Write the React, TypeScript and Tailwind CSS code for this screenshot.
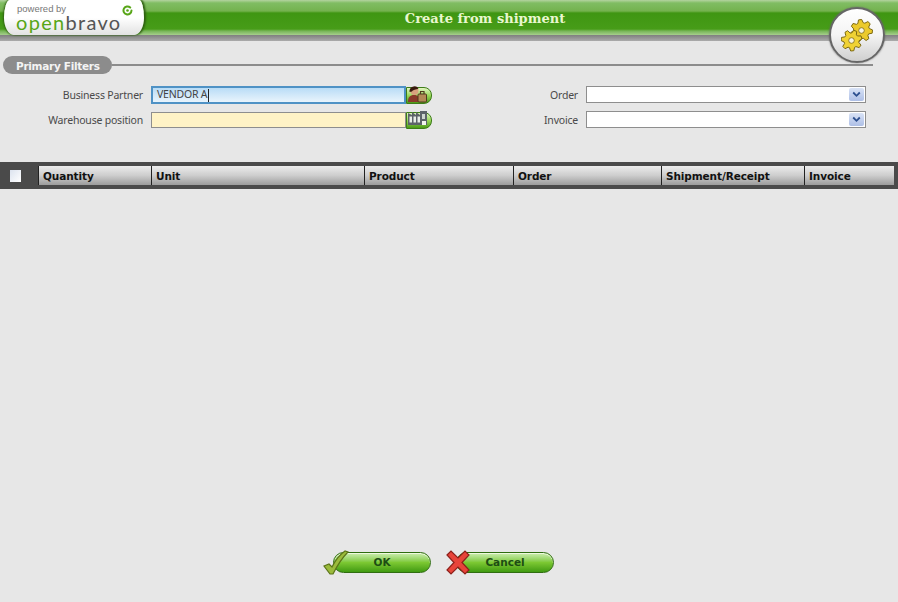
const LABEL = "font-['Noto_Sans',sans-serif] text-[10.5px] tracking-[-0.2px] text-[#4a4a4a] pt-[2px]";

const columns = [
  { label: 'Quantity', width: 'w-[113px]' },
  { label: 'Unit', width: 'w-[213px]' },
  { label: 'Product', width: 'w-[149px]' },
  { label: 'Order', width: 'w-[148px]' },
  { label: 'Shipment/Receipt', width: 'w-[143px]' },
  { label: 'Invoice', width: 'w-[90px]' },
];

// builds the outline of a cog wheel
function gearPath(cx: number, cy: number, outer: number, inner: number, teeth: number, rot: number) {
  const pts: string[] = [];
  const step = (Math.PI * 2) / teeth;
  for (let i = 0; i < teeth; i++) {
    const a = rot + i * step;
    const offsets = [
      [-0.5, inner],
      [-0.28, outer],
      [0.05, outer],
      [0.27, inner],
    ];
    for (const [o, r] of offsets) {
      const t = a + o * step;
      pts.push(`${(cx + Math.cos(t) * r).toFixed(1)} ${(cy + Math.sin(t) * r).toFixed(1)}`);
    }
  }
  return `M${pts.join('L')}Z`;
}

function Logo() {
  return (
    <div className="relative ml-[4px] h-[35px] w-[140px] shrink-0 rounded-tl-[6px_18px] rounded-tr-[5px_18px] rounded-bl-[10px_18px] rounded-br-[10px_18px] bg-gradient-to-b from-white via-white to-[#e2e2e2] shadow-[2px_0_2px_#2f5f12,-1px_0_2px_#2f5f12]">
      <div className="absolute left-[13px] top-[3px] font-['Liberation_Sans',sans-serif] text-[9.5px] leading-[11px] text-[#777]">powered by</div>
      <div className="absolute left-[12px] top-[14px] font-['Lato',sans-serif] text-[20px] leading-[16px] tracking-[1.3px]">
        <span className="text-[#58a618]">open</span>
        <span className="text-[#555]">bravo</span>
      </div>
      <svg className="absolute left-[118px] top-[5px]" width="11" height="11" viewBox="0 0 11 11" fill="none">
        <path d="M9.500 5.500a4 4 0 1 1-1.300-3" stroke="#58a618" strokeWidth="2" strokeLinecap="round" />
        <circle cx="5.500" cy="5.500" r="1.300" fill="#58a618" />
      </svg>
    </div>
  );
}

function Gears() {
  return (
    <svg width="32" height="33" viewBox="0 0 32 33">
      <path d={gearPath(20.5, 11.5, 11, 8, 7, 0.2)} fill="#ecca2c" stroke="#7d6a12" strokeWidth="1" strokeLinejoin="round" />
      <circle cx="20.500" cy="11.500" r="2.800" fill="#f7f4e2" stroke="#7d6a12" strokeWidth="0.800" />
      <path d={gearPath(10.5, 21.5, 10.500, 7.500, 7, 0.7)} fill="#f0d234" stroke="#7d6a12" strokeWidth="1" strokeLinejoin="round" />
      <circle cx="10.500" cy="21.500" r="2.800" fill="#f7f4e2" stroke="#7d6a12" strokeWidth="0.800" />
    </svg>
  );
}

function PersonIcon() {
  return (
    <svg width="22" height="19" viewBox="0 0 22 19">
      <path d="M1 17c0-5 2-7 6-7s6 2 6 7z" fill="#8a3a2a" />
      <circle cx="7.500" cy="6" r="4" fill="#d8a27e" />
      <path d="M2.500 7a5 5 0 0 1 9-3.500C9 5 6 4.500 5 6.500z" fill="#38190d" />
      <rect x="11" y="9" width="8.500" height="8" rx="1" fill="#b28a56" stroke="#4f3a1d" />
      <path d="M13.500 9V6.500h3.500V9" fill="none" stroke="#4f3a1d" strokeWidth="1.200" />
    </svg>
  );
}

function WarehouseIcon() {
  return (
    <svg width="22" height="17" viewBox="0 0 22 17">
      <path d="M1 15V3l4 2V2l4 3V2l4 3V1h7v14z" fill="#5d6369" />
      <rect x="2.500" y="6.500" width="2.500" height="6" fill="#e9eee8" />
      <rect x="6.500" y="6.500" width="2.500" height="6" fill="#e9eee8" />
      <rect x="10.500" y="6.500" width="2.500" height="6" fill="#e9eee8" />
      <rect x="15" y="4" width="3" height="5" fill="#cfd5d0" />
      <rect x="15" y="11" width="4" height="4" fill="#f2f4ef" />
    </svg>
  );
}

function Selector({ children }: { children: React.ReactNode }) {
  return (
    <div className="relative h-[17px] w-[26px] rounded-r-[8px] border border-[#3d7d18] bg-gradient-to-b from-[#e3f5c0] via-[#9ad85a] to-[#4c9a12]">
      <div className="absolute -top-[3px] left-0">{children}</div>
    </div>
  );
}

function SelectBox() {
  return (
    <div className="flex h-[17px] w-[280px] items-center justify-end border border-[#8e8e8e] bg-white pr-[1px]">
      <div className="flex h-[13px] w-[15px] items-center justify-center rounded-[2px] bg-gradient-to-b from-[#d9e3f6] to-[#aebfe6]">
        <svg width="9" height="7" viewBox="0 0 9 7">
          <path d="M1.200 1.500L4.500 4.800L7.800 1.500" fill="none" stroke="#2c4f8f" strokeWidth="1.800" />
        </svg>
      </div>
    </div>
  );
}

function GreenButton({ label, children }: { label: string; children: React.ReactNode }) {
  return (
    <button className="relative flex h-[21px] w-[98px] items-center justify-center rounded-full border border-[#2f6d10] bg-gradient-to-b from-[#cdeeb0] via-[#7cc832] to-[#3f9a10] pt-[1px] font-['DejaVu_Sans',sans-serif] text-[10.5px] font-bold text-[#1d4d14] shadow-[inset_0_1px_0_#eef9df]">
      <span className="absolute left-[-11px] top-[-3px]">{children}</span>
      {label}
    </button>
  );
}

export default function App() {
  return (
    <div className="flex h-[602px] w-[898px] flex-col overflow-hidden bg-[#e7e7e7]">
      <header className="relative shrink-0">
        <div className="flex h-[35px] bg-[linear-gradient(to_bottom,#b4d3a0_0px,#80bd62_3px,#74b24e_11px,#3f9612_13px,#479c18_29px,#76b556_31px,#a6cf8c_35px)]">
          <Logo />
          <h1 className="flex flex-1 items-center justify-center pr-[72px] pt-[2px] font-['DejaVu_Serif','Liberation_Serif',serif] text-[13px] font-bold text-[#e9f7cf]">
            Create from shipment
          </h1>
        </div>
        <div className="h-[6px] bg-gradient-to-b from-[#7f7f7f] to-[#ababab]" />
        <div className="absolute right-[13px] top-[7px] flex h-[56px] w-[56px] items-center justify-center rounded-full border-2 border-[#666] bg-gradient-to-b from-white via-[#f4f4f4] to-[#cfcfcf] shadow-[0_0_2px_#666]">
          <Gears />
        </div>
      </header>

      <section className="mt-[15px] flex items-center pl-[3px] pr-[25px]">
        <div className="flex h-[18px] w-[109px] items-center rounded-full bg-[#8c8c8c] pl-[13px] pt-[3px] font-['DejaVu_Sans',sans-serif] text-[10.5px] font-bold tracking-[-0.3px] text-[#f4f4f4]">
          Primary Filters
        </div>
        <div className="h-[2px] flex-1 bg-[#8c8c8c]" />
      </section>

      <section className="mt-[12px] grid grid-cols-[151px_281px_154px_280px] gap-y-[7px]">
        <div className={`${LABEL} flex h-[18px] items-center justify-end pr-[8px]`}>Business Partner</div>
        <div className="flex items-center">
          <div className="flex h-[18px] w-[255px] items-center border-2 border-[#4f92c5] bg-gradient-to-b from-[#b9dcf6] to-[#e9f4fc] pl-[4px] font-['Noto_Sans',sans-serif] text-[10.5px] tracking-[-0.2px] text-[#444]">
            VENDOR A<span className="ml-[1px] h-[13px] w-px bg-[#222]" />
          </div>
          <Selector><PersonIcon /></Selector>
        </div>
        <div className={`${LABEL} flex h-[18px] items-center justify-end pr-[8px]`}>Order</div>
        <SelectBox />

        <div className={`${LABEL} flex h-[18px] items-center justify-end pr-[8px]`}>Warehouse position</div>
        <div className="flex items-center">
          <div className="h-[16px] w-[255px] border border-[#8e8e8e] bg-[#fff3c6]" />
          <Selector><WarehouseIcon /></Selector>
        </div>
        <div className={`${LABEL} flex h-[18px] items-center justify-end pr-[8px]`}>Invoice</div>
        <SelectBox />
      </section>

      <section className="mt-[33px] flex h-[27px] items-stretch border-y-[4px] border-[#4a4a4a] bg-[#4a4a4a]">
        <div className="flex w-[38px] shrink-0 items-center pl-[10px]">
          <div className="h-[12px] w-[11px] bg-gradient-to-br from-[#dce3ef] to-white" />
        </div>
        {columns.map((col) => (
          <div
            key={col.label}
            className={`${col.width} flex shrink-0 items-center border-l border-[#222] bg-gradient-to-b from-[#ececec] via-[#cdcdcd] to-[#9c9c9c] pl-[4px] pt-[2px] font-['DejaVu_Sans',sans-serif] text-[10.5px] font-bold tracking-[-0.1px] text-[#111]`}
          >
            {col.label}
          </div>
        ))}
      </section>

      <div className="flex-1" />

      <footer className="mb-[29px] flex justify-center gap-[25px] pr-[11px]">
        <GreenButton label="OK">
          <svg width="26" height="26" viewBox="0 0 26 26">
            <path d="M1 16l5-2 3 3C12 11 16 5 22 1l3 1C18 9 14 16 10 24L7 24z" fill="#9bbb3c" stroke="#5b7418" strokeWidth="1.200" />
          </svg>
        </GreenButton>
        <GreenButton label="Cancel">
          <svg width="24" height="25" viewBox="0 0 24 25">
            <path d="M1 5l4-4 7 7 7-7 4 4-7 7.500 7 7.500-4 4-7-7-7 7-4-4 7-7.500z" fill="#e8443a" stroke="#8c1f1a" strokeWidth="1.200" />
          </svg>
        </GreenButton>
      </footer>
    </div>
  );
}
